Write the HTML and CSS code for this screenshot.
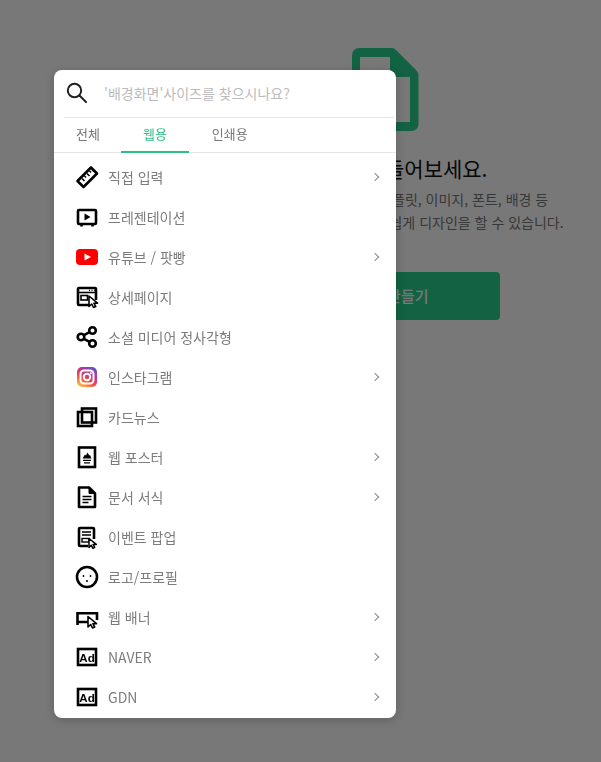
FILE: index.html
```html
<!DOCTYPE html>
<html lang="ko">
<head>
  <meta charset="UTF-8">
  <meta name="viewport" content="width=device-width, initial-scale=1.0">
  <title>새 디자인 만들기</title>
  <link rel="stylesheet" href="styles.css">
</head>
<body>
  <main class="empty">
    <svg class="empty-icon" width="67" height="83" viewBox="0 0 67 83">
      <path fill-rule="evenodd" d="M7 0H40Q42 0 44 2L64 22Q66.500 24.500 66.500 27V76a7 7 0 0 1-7 7H7a7 7 0 0 1-7-7V7a7 7 0 0 1 7-7ZM8 9V74H58V29H38V9Z"/>
    </svg>
    <h1 class="empty-title">디자인을 만들어보세요.</h1>
    <p class="empty-text">미리 캔버스의 여러 다양한 템플릿, 이미지, 폰트, 배경 등<br>다양한 요소를 활용하여 누구나 쉽게 디자인을 할 수 있습니다.</p>
    <a href="#" class="empty-btn">디자인 만들기</a>
  </main>

  <div class="dim"></div>

  <div class="size-menu">
    <div class="search">
      <svg width="21" height="21" viewBox="0 0 21 21" fill="none" stroke="#222" stroke-width="2">
        <circle cx="8.500" cy="8.500" r="6.700"/>
        <path d="M13.500 13.500l6.500 6.500" stroke-linecap="round"/>
      </svg>
      <input class="search-input" type="text" placeholder="'배경화면'사이즈를 찾으시나요?">
    </div>

    <div class="tabs">
      <a href="#" class="tab">전체</a>
      <a href="#" class="tab active">웹용</a>
      <a href="#" class="tab">인쇄용</a>
    </div>

    <ul class="list">
      <li class="item has-sub">
        <svg class="ico" viewBox="0 0 24 24">
          <path d="M2.500 16L16 2.500 22 8.500 8.500 22Z" stroke-linejoin="round"/>
          <path d="M7 13.500l2.500 2.500M9.500 11l1.500 1.500M12 8.500l2.500 2.500M14.500 6l1.500 1.500M17 4.500l2 2" stroke-width="1.600"/>
        </svg>
        <span>직접 입력</span>
      </li>
      <li class="item">
        <svg class="ico" viewBox="0 0 24 24">
          <rect x="3" y="5" width="18" height="14" rx="1"/>
          <path d="M9.500 8.500v7l6-3.500Z" fill="#000" stroke="none"/>
          <path d="M6.500 19v2.500M17.500 19v2.500"/>
        </svg>
        <span>프레젠테이션</span>
      </li>
      <li class="item has-sub">
        <svg class="ico" viewBox="0 0 24 24">
          <rect x="1" y="4" width="22" height="16" rx="4" fill="#f00" stroke="none"/>
          <path d="M9.500 8.500v7l6.500-3.500Z" fill="#fff" stroke="none"/>
        </svg>
        <span>유튜브 / 팟빵</span>
      </li>
      <li class="item">
        <svg class="ico" viewBox="0 0 24 24">
          <path d="M14 20H4a1 1 0 0 1-1-1V4a1 1 0 0 1 1-1h16a1 1 0 0 1 1 1v11"/>
          <path d="M3 7.500h18" stroke-width="1.600"/>
          <path d="M14 5.300h1M16.500 5.300h1M19 5.300h.8" stroke-width="1.300"/>
          <rect x="6" y="10.500" width="6.500" height="4.500" stroke-width="1.600"/>
          <path d="M14 11v10.500l2.700-2.500 1.800 3.500 2.200-1-1.800-3.300h3.600Z" fill="#fff" stroke-width="1.600" stroke-linejoin="round"/>
        </svg>
        <span>상세페이지</span>
      </li>
      <li class="item">
        <svg class="ico" viewBox="0 0 24 24">
          <circle cx="6" cy="12" r="3.300"/>
          <circle cx="17.500" cy="5.500" r="3.300"/>
          <circle cx="17.500" cy="18.500" r="3.300"/>
          <path d="M9 10.200l5.500-3M9 13.800l5.500 3"/>
        </svg>
        <span>소셜 미디어 정사각형</span>
      </li>
      <li class="item has-sub">
        <svg class="ico" viewBox="0 0 24 24">
          <defs>
            <linearGradient id="insta" x1="0.200" y1="1" x2="0.800" y2="0">
              <stop offset="0" stop-color="#fdc04f"/>
              <stop offset="0.350" stop-color="#f0503c"/>
              <stop offset="0.650" stop-color="#c8308f"/>
              <stop offset="1" stop-color="#5b55c8"/>
            </linearGradient>
          </defs>
          <rect x="2" y="2" width="20" height="20" rx="5" fill="url(#insta)" stroke="none"/>
          <rect x="5.500" y="5.500" width="13" height="13" rx="3.500" stroke="#fff" stroke-width="2"/>
          <circle cx="12" cy="12" r="3.200" stroke="#fff" stroke-width="2"/>
          <circle cx="15.800" cy="8.200" r="1" fill="#fff" stroke="none"/>
        </svg>
        <span>인스타그램</span>
      </li>
      <li class="item">
        <svg class="ico" viewBox="0 0 24 24">
          <rect x="7" y="3.500" width="14" height="14"/>
          <rect x="3" y="7" width="14" height="14"/>
        </svg>
        <span>카드뉴스</span>
      </li>
      <li class="item has-sub">
        <svg class="ico" viewBox="0 0 24 24">
          <rect x="4" y="2.500" width="16" height="19.500"/>
          <path d="M7.500 13.500l2.500-4 1 1 1.500-3 1.800 3 .7-.6 1.500 3.600Z" fill="#000" stroke="none"/>
          <path d="M8 15.300h8M9 17.800h6" stroke-width="1.300"/>
        </svg>
        <span>웹 포스터</span>
      </li>
      <li class="item has-sub">
        <svg class="ico" viewBox="0 0 24 24">
          <path d="M4 2.500h10L20 8.500V22H4Z" stroke-linejoin="round"/>
          <path d="M14 2.500v6h6Z" fill="#000" stroke-width="1"/>
          <path d="M7.500 11.500h9M7.500 14.500h9M7.500 17.500h6" stroke-width="1.400"/>
        </svg>
        <span>문서 서식</span>
      </li>
      <li class="item">
        <svg class="ico" viewBox="0 0 24 24">
          <path d="M13 21H5a1 1 0 0 1-1-1V4a1 1 0 0 1 1-1h13a1 1 0 0 1 1 1v10"/>
          <path d="M7 7h9M7 10h9" stroke-width="1.400"/>
          <rect x="7" y="13.500" width="7" height="3.500" stroke-width="1.400"/>
          <path d="M14 13.500v9l2.300-2.200 1.600 3 1.800-.9-1.600-3h3.200Z" fill="#fff" stroke-width="1.500" stroke-linejoin="round"/>
        </svg>
        <span>이벤트 팝업</span>
      </li>
      <li class="item">
        <svg class="ico" viewBox="0 0 24 24">
          <circle cx="12" cy="12" r="10"/>
          <circle cx="8.500" cy="11" r=".9" fill="#000" stroke="none"/>
          <circle cx="15.500" cy="11" r=".9" fill="#000" stroke="none"/>
          <path d="M11 16h2" stroke-width="1.500"/>
        </svg>
        <span>로고/프로필</span>
      </li>
      <li class="item has-sub">
        <svg class="ico" viewBox="0 0 24 24">
          <path d="M2.500 7v13M22 7v8M2.500 8.200h19.500M2.500 17h10.500"/>
          <path d="M13 11.500v10.500l2.700-2.500 1.800 3.500 2.200-1-1.800-3.300h3.600Z" fill="#fff" stroke-width="1.600" stroke-linejoin="round"/>
        </svg>
        <span>웹 배너</span>
      </li>
      <li class="item has-sub">
        <svg class="ico" viewBox="0 0 24 24">
          <rect x="3" y="4" width="18" height="16"/>
          <text class="ad" x="12" y="16.500">Ad</text>
        </svg>
        <span>NAVER</span>
      </li>
      <li class="item has-sub">
        <svg class="ico" viewBox="0 0 24 24">
          <rect x="3" y="4" width="18" height="16"/>
          <text class="ad" x="12" y="16.500">Ad</text>
        </svg>
        <span>GDN</span>
      </li>
    </ul>
  </div>
</body>
</html>
```

FILE: styles.css
```css
*{
  margin: 0;
  padding: 0;
  box-sizing: border-box;
}

html, body{
  height: 100%;
}

body{
  background-color: #fff;
  font-family: "Noto Sans CJK KR", "Noto Sans", sans-serif;
  overflow: hidden;
}

a{
  text-decoration: none;
}

/* behind the dim layer */
.empty{
  margin-left: 169px;
  padding-top: 48px;
  display: flex;
  flex-direction: column;
  align-items: center;
  white-space: nowrap;
}

.empty-icon{
  fill: #2ad18f;
  flex: none;
}

.empty-title{
  margin-top: 21px;
  font-size: 21px;
  font-weight: 400;
  line-height: 32px;
  color: #111;
}

.empty-text{
  margin-top: 4px;
  font-size: 14px;
  line-height: 23px;
  color: #777;
  text-align: center;
}

.empty-btn{
  margin-top: 38px;
  width: 230px;
  height: 48px;
  line-height: 48px;
  border-radius: 4px;
  background-color: #2ad18f;
  color: #fff;
  font-size: 15px;
  font-weight: 500;
  text-align: center;
}

.dim{
  position: fixed;
  left: 0;
  top: 0;
  right: 0;
  bottom: 0;
  background-color: rgba(0, 0, 0, .53);
}

.size-menu{
  position: absolute;
  left: 54px;
  top: 70px;
  width: 342px;
  height: 648px;
  background-color: #fff;
  border-radius: 8px;
  box-shadow: 0 2px 10px rgba(0, 0, 0, .2);
}

.search{
  margin: 0 2px 0 10px;
  height: 48px;
  padding: 0 0 2px 2px;
  display: flex;
  align-items: center;
  gap: 17px;
  border-bottom: 1px solid #e6e6e6;
}

.search svg{
  flex: none;
}

.search-input{
  flex: 1;
  min-width: 0;
  border: 0;
  outline: 0;
  font-family: inherit;
  font-size: 14px;
  color: #333;
}

.search-input::placeholder{
  color: #bbb;
}

.tabs{
  display: flex;
  height: 35px;
  border-bottom: 1px solid #e6e6e6;
}

.tab{
  padding: 0 22px;
  margin-bottom: -1px;
  font-size: 13px;
  line-height: 32px;
  color: #777;
  border-bottom: 2px solid transparent;
}

.tab:first-child{
  padding-right: 21px;
}

.tab:last-child{
  padding-left: 23px;
}

.tab.active{
  color: #2cbf85;
  border-bottom-color: #2cbf85;
}

.list{
  list-style: none;
  padding-top: 4px;
}

.item{
  position: relative;
  height: 40px;
  padding-left: 21px;
  display: flex;
  align-items: center;
  gap: 9px;
  font-size: 14px;
  color: #7c7c7c;
}

.has-sub::after{
  content: "";
  position: absolute;
  right: 18px;
  top: 17px;
  width: 5px;
  height: 5px;
  border-top: 1px solid #888;
  border-right: 1px solid #888;
  transform: rotate(45deg);
}

.ico{
  width: 24px;
  height: 24px;
  flex: none;
  fill: none;
  stroke: #000;
  stroke-width: 2.6;
}

.ad{
  font-family: "Liberation Sans", sans-serif;
  font-size: 11.500px;
  font-weight: 700;
  text-anchor: middle;
  fill: #000;
  stroke: none;
}
```
